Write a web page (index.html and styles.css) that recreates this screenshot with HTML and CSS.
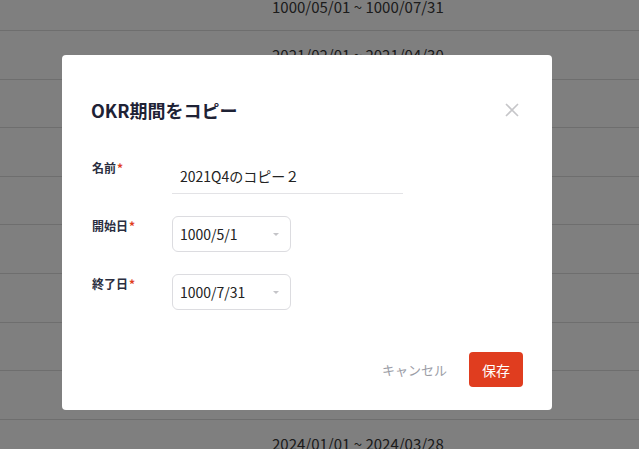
FILE: index.html
```html
<!DOCTYPE html>
<html lang="ja">
<head>
    <meta charset="UTF-8">
    <meta name="viewport" content="width=device-width, initial-scale=1.0">
    <title>OKR期間</title>
    <link rel="stylesheet" href="styles.css">
</head>
<body>
    <div class="period-list">
        <div class="period-row"><span></span><span>1000/05/01 ~ 1000/07/31</span></div>
        <div class="period-row"><span></span><span>2021/02/01 ~ 2021/04/30</span></div>
        <div class="period-row"><span></span><span>2021/05/01 ~ 2021/07/31</span></div>
        <div class="period-row"><span></span><span>2021/08/01 ~ 2021/10/31</span></div>
        <div class="period-row"><span></span><span>2021/11/01 ~ 2022/01/31</span></div>
        <div class="period-row"><span></span><span>2022/02/01 ~ 2022/04/30</span></div>
        <div class="period-row"><span></span><span>2022/05/01 ~ 2022/07/31</span></div>
        <div class="period-row"><span></span><span>2023/01/01 ~ 2023/03/31</span></div>
        <div class="period-row"><span></span><span>2023/10/01 ~ 2023/12/31</span></div>
        <div class="period-row"><span></span><span>2024/01/01 ~ 2024/03/28</span></div>
    </div>

    <div class="overlay">
        <div class="modal">
            <div class="modal-header">
                <h2 class="modal-title">OKR期間をコピー</h2>
                <span class="close-modal">
                    <svg width="14" height="14" viewBox="0 0 14 14">
                        <path d="M1 1 L13 13 M13 1 L1 13" stroke="#c6c6c9" stroke-width="1.6" fill="none"/>
                    </svg>
                </span>
            </div>
            <form class="modal-form">
                <div class="form-row">
                    <label class="form-label">名前<span class="required">*</span></label>
                    <input class="text-input" type="text" value="2021Q4のコピー２">
                </div>
                <div class="form-row">
                    <label class="form-label">開始日<span class="required">*</span></label>
                    <div class="date-select">
                        <span>1000/5/1</span>
                        <span class="caret"></span>
                    </div>
                </div>
                <div class="form-row">
                    <label class="form-label">終了日<span class="required">*</span></label>
                    <div class="date-select">
                        <span>1000/7/31</span>
                        <span class="caret"></span>
                    </div>
                </div>
            </form>
            <div class="modal-footer">
                <button class="btn-cancel" type="button">キャンセル</button>
                <button class="btn-save" type="button">保存</button>
            </div>
        </div>
    </div>
</body>
</html>
```

FILE: styles.css
```css
body {
    font-family: "Noto Sans CJK JP", "Noto Sans", sans-serif;
    margin: 0;
    padding: 0;
    background: white;
    overflow: hidden;
}

.period-list {
    margin-top: -17.6px;
}

.period-row {
    display: grid;
    grid-template-columns: 272px 1fr;
    align-items: center;
    height: 47.6px;
    border-bottom: 1px solid #dcdcdc;
    font-size: 15px;
    color: #383838;
}

.overlay {
    position: fixed;
    top: 0;
    left: 0;
    right: 0;
    bottom: 0;
    background: rgba(0,0,0,0.5);
}

.modal {
    margin: 55px 0 0 62px;
    width: 490px;
    height: 355px;
    box-sizing: border-box;
    background: white;
    border-radius: 4px;
    padding: 0 29px;
}

.modal-header {
    display: flex;
    justify-content: space-between;
    align-items: center;
    padding-top: 42px;
}

.modal-title {
    margin: 0;
    font-size: 18px;
    line-height: 26px;
    font-weight: bold;
    color: #1e2235;
}

.close-modal {
    display: flex;
    margin-right: 4px;
}

.modal-form {
    display: flex;
    flex-direction: column;
    gap: 22px;
    margin-top: 35px;
}

.form-row {
    display: flex;
    align-items: flex-start;
}

.form-label {
    width: 80px;
    padding-left: 1px;
    font-size: 12px;
    line-height: 20px;
    font-weight: bold;
    color: #2a2e40;
}

.required {
    color: #e03d1f;
    margin-left: 1px;
}

.text-input {
    width: 231px;
    height: 36px;
    box-sizing: border-box;
    border: none;
    border-bottom: 1px solid #e3e3e6;
    padding: 0 8px;
    font-family: inherit;
    font-size: 14px;
    color: #222;
    outline: none;
}

.date-select {
    width: 119px;
    height: 36px;
    box-sizing: border-box;
    border: 1px solid #dcdce0;
    border-radius: 6px;
    display: flex;
    justify-content: space-between;
    align-items: center;
    padding: 0 11px 0 7px;
    font-size: 14px;
    color: #222;
}

.caret {
    width: 0;
    height: 0;
    border-left: 3.5px solid transparent;
    border-right: 3.5px solid transparent;
    border-top: 3.5px solid #c4c4c8;
}

.modal-footer {
    display: flex;
    justify-content: flex-end;
    align-items: center;
    gap: 22px;
    margin-top: 42px;
}

.btn-cancel {
    background: none;
    border: none;
    padding: 0;
    font-family: inherit;
    font-size: 13px;
    color: #9b9da6;
    cursor: pointer;
}

.btn-save {
    height: 35px;
    padding: 0 13px;
    background: #e03d1f;
    color: white;
    border: none;
    border-radius: 4px;
    font-family: inherit;
    font-size: 14px;
    cursor: pointer;
}
```
